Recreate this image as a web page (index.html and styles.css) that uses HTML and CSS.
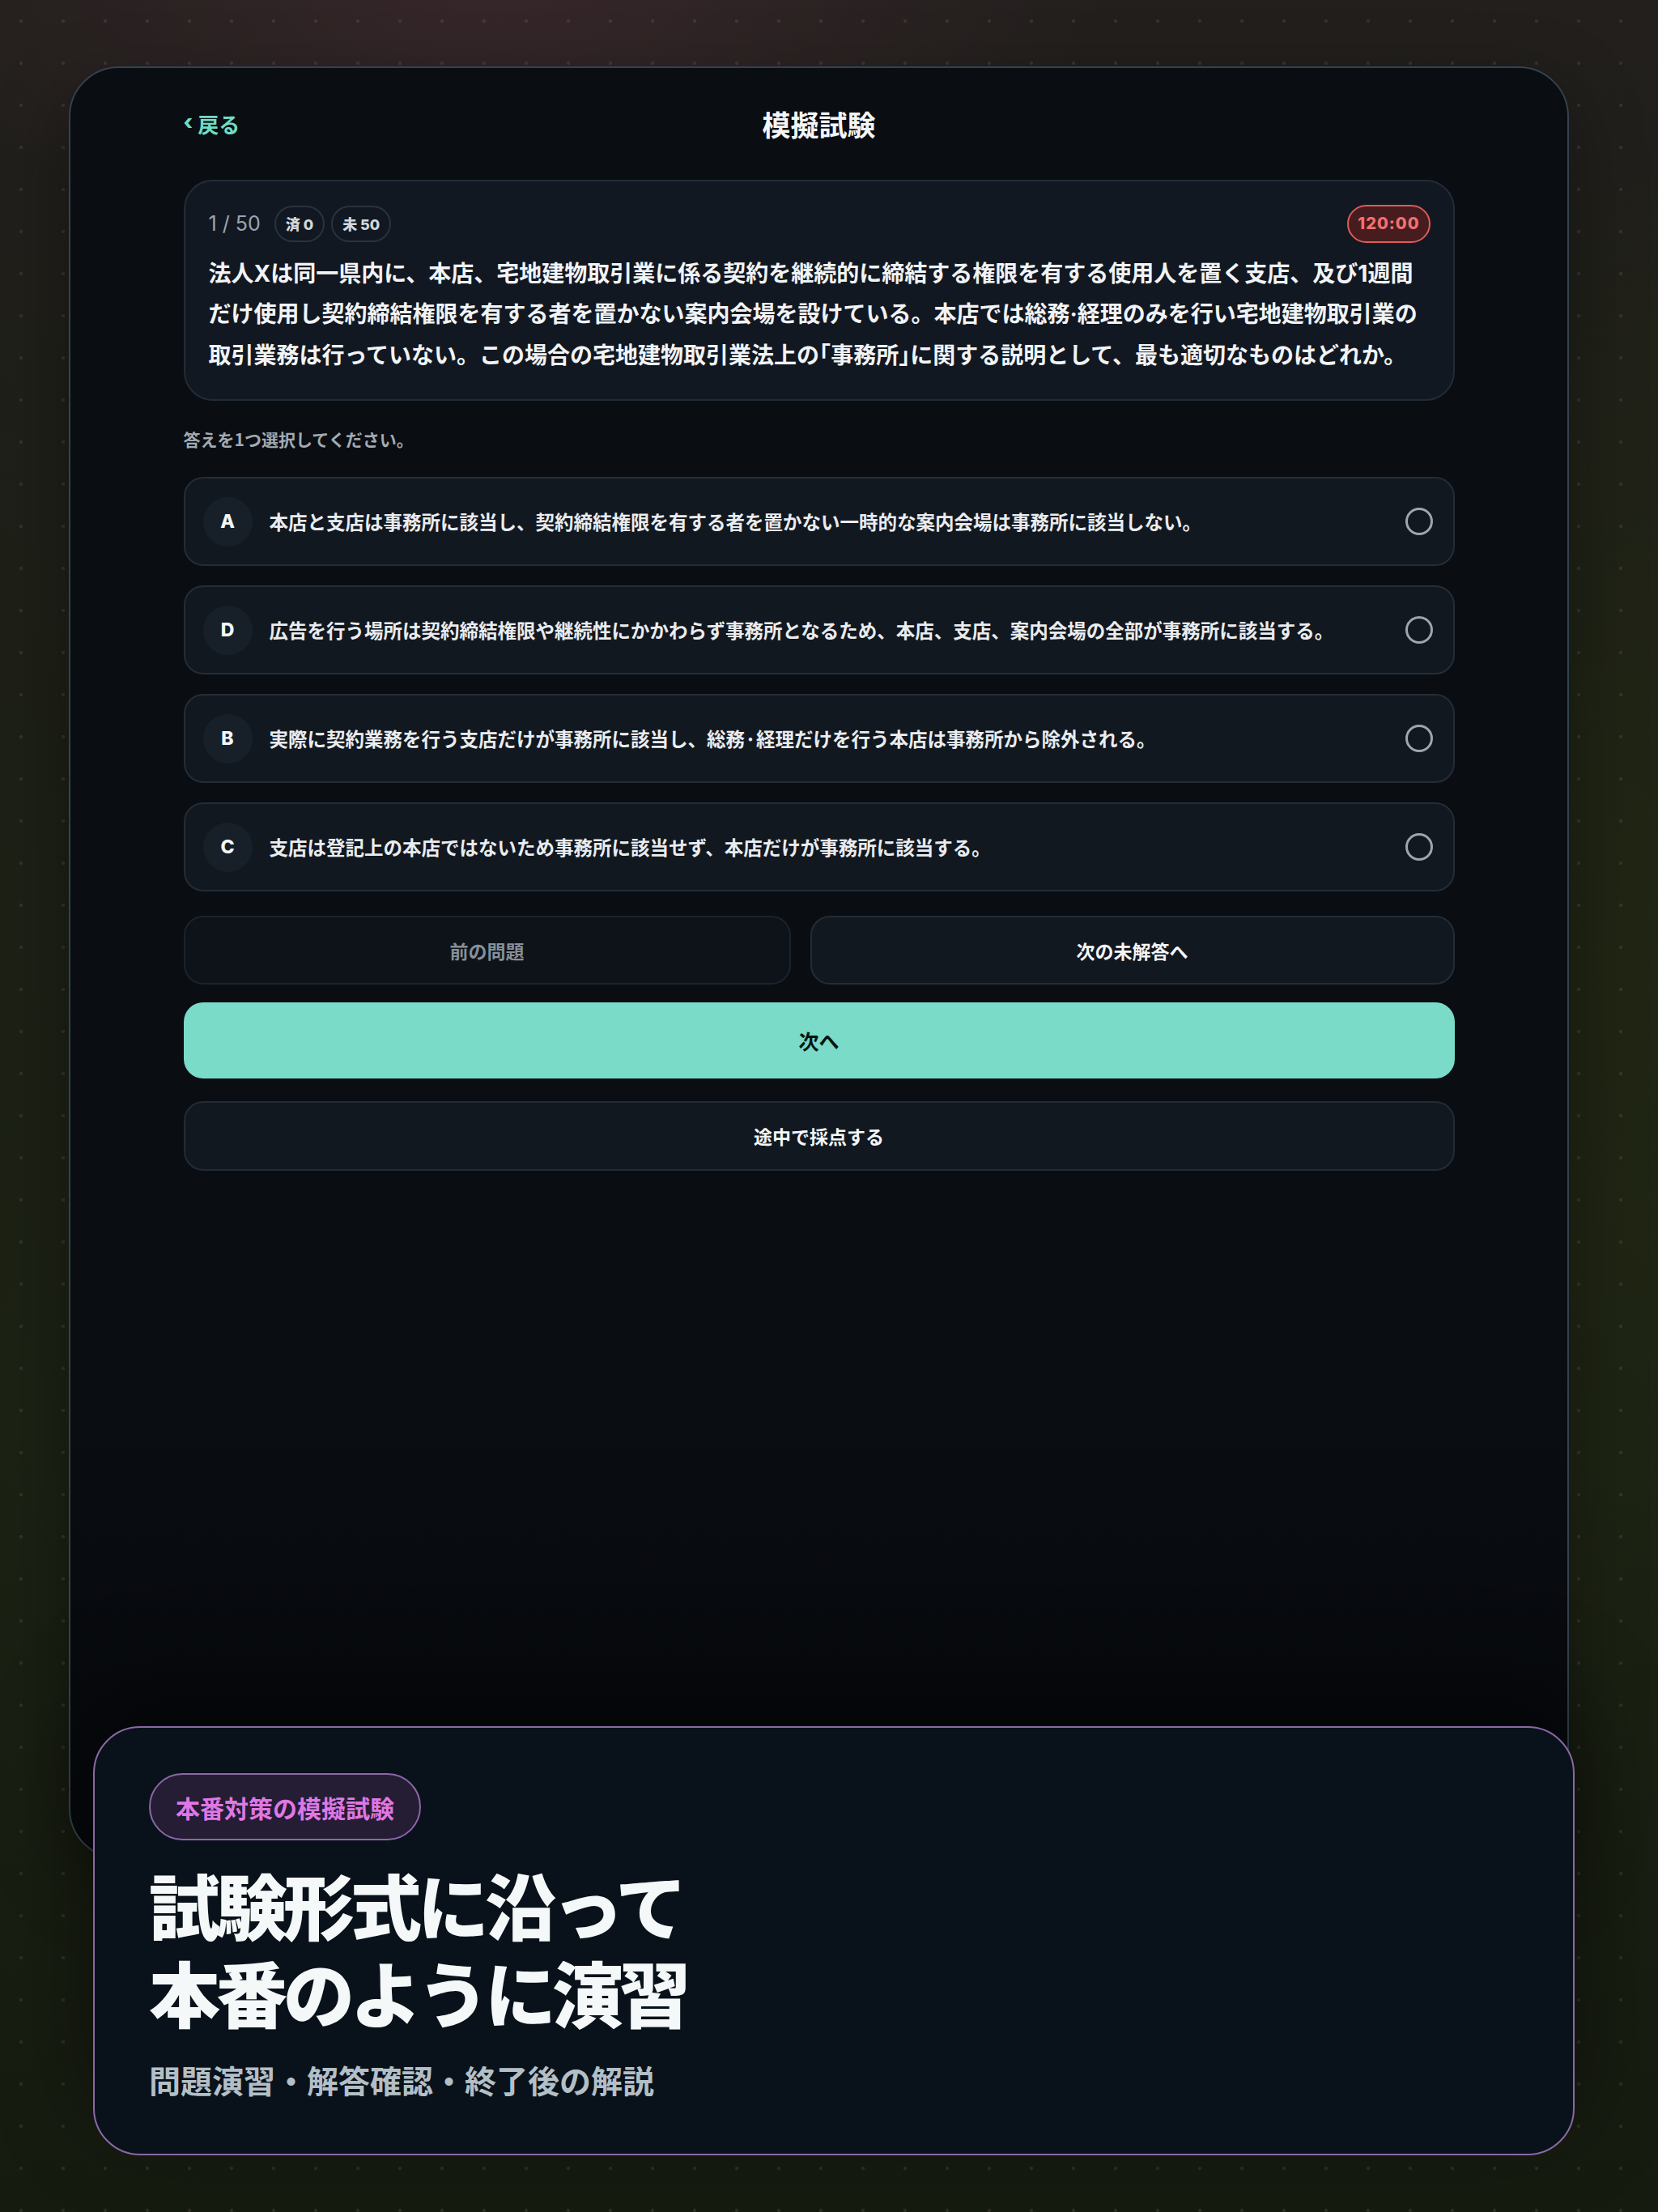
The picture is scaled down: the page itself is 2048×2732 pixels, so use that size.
FILE: index.html
```html
<!DOCTYPE html>
<html lang="ja">
<head>
<meta charset="utf-8">
<title>模擬試験</title>
<link rel="stylesheet" href="styles.css">
</head>
<body>
<div class="stage">
  <div class="frame">
    <div class="content">
      <header class="topbar">
        <a class="back"><span class="chev">‹</span> 戻る</a>
        <h1 class="title">模擬試験</h1>
        <span></span>
      </header>

      <section class="qcard">
        <div class="qtop">
          <span class="count">1 / 50</span>
          <span class="chip">済 0</span>
          <span class="chip">未 50</span>
          <span class="timer">120:00</span>
        </div>
        <p class="qtext">
          <span class="ln">法人Xは同一県内に、本店、宅地建物取引業に係る契約を継続的に締結する権限を有する使用人を置く支店、及び1週間</span>
          <span class="ln">だけ使用し契約締結権限を有する者を置かない案内会場を設けている。本店では総務·経理のみを行い宅地建物取引業の</span>
          <span class="ln">取引業務は行っていない。この場合の宅地建物取引業法上の<span class="half">「</span>事務所<span class="half">」</span>に関する説明として、最も適切なものはどれか。</span>
        </p>
      </section>

      <p class="hint">答えを1つ選択してください。</p>

      <ul class="options">
        <li class="opt"><span class="letter">A</span><span class="otext">本店と支店は事務所に該当し、契約締結権限を有する者を置かない一時的な案内会場は事務所に該当しない。</span><span class="radio"></span></li>
        <li class="opt"><span class="letter">D</span><span class="otext">広告を行う場所は契約締結権限や継続性にかかわらず事務所となるため、本店、支店、案内会場の全部が事務所に該当する。</span><span class="radio"></span></li>
        <li class="opt"><span class="letter">B</span><span class="otext">実際に契約業務を行う支店だけが事務所に該当し、総務·経理だけを行う本店は事務所から除外される。</span><span class="radio"></span></li>
        <li class="opt"><span class="letter">C</span><span class="otext">支店は登記上の本店ではないため事務所に該当せず、本店だけが事務所に該当する。</span><span class="radio"></span></li>
      </ul>

      <div class="navrow">
        <button class="btn btn-prev">前の問題</button>
        <button class="btn btn-skip">次の未解答へ</button>
      </div>
      <button class="btn btn-next">次へ</button>
      <button class="btn btn-grade">途中で採点する</button>
    </div>
  </div>

  <section class="promo">
    <span class="tag">本番対策の模擬試験</span>
    <h2 class="headline"><span class="hl">試験形式に沿って</span><span class="hl">本番のように演習</span></h2>
    <p class="sub">問題演習・解答確認・終了後の解説</p>
  </section>
</div>
</body>
</html>
```

FILE: styles.css
```css
* { box-sizing: border-box; }

html, body {
  margin: 0;
  padding: 0;
}

body {
  width: 2048px;
  height: 2732px;
  overflow: hidden;
  font-family: Inter, "Noto Sans CJK JP", sans-serif;
  color: #f1f3f5;
  background-color: #1b1f14;
  background-image:
    radial-gradient(circle, rgba(205, 180, 205, 0.12) 1.6px, transparent 2.6px),
    radial-gradient(ellipse 1000px 420px at 30% 0%, rgba(58, 40, 44, 0.85), rgba(58, 40, 44, 0) 75%),
    radial-gradient(ellipse 700px 1400px at 100% 45%, rgba(34, 40, 18, 0.7), rgba(34, 40, 18, 0) 75%),
    linear-gradient(180deg, #221f1d 0%, #1d2016 35%, #1c2214 65%, #161b10 100%);
  background-size: 52px 52px, auto, auto, auto;
}

.stage {
  position: relative;
  width: 2048px;
  height: 2732px;
  padding: 82px 0 0 85px;
}

/* ---------- device frame ---------- */
.frame {
  width: 1853px;
  height: 2214px;
  border: 2px solid #33424e;
  border-radius: 62px;
  background: linear-gradient(180deg, #0a0d12 0%, #0a0d12 72%, #06080b 100%);
  padding-top: 38px;
  box-shadow: 0 30px 90px rgba(0, 0, 0, 0.35);
}

.content {
  width: 1570px;
  margin: 0 auto;
}

.topbar {
  display: grid;
  grid-template-columns: 1fr auto 1fr;
  align-items: center;
  height: 60px;
}

.back {
  font-family: "Noto Sans CJK JP", sans-serif;
  font-size: 26px;
  font-weight: 700;
  color: #6fdcc4;
  display: flex;
  align-items: center;
  gap: 6px;
}

.chev {
  font-family: Inter, sans-serif;
  font-size: 26px;
  font-weight: 800;
  line-height: 1;
  margin-top: -3px;
}

.title {
  margin: 0;
  font-family: "Noto Sans CJK JP", sans-serif;
  font-size: 35px;
  font-weight: 700;
  color: #f4f5f7;
}

/* ---------- question card ---------- */
.qcard {
  margin-top: 40px;
  border: 2px solid #222c36;
  border-radius: 36px;
  background: #121821;
  padding: 29px 28px 29px 29px;
}

.qtop {
  display: flex;
  align-items: center;
  height: 46px;
}

.count {
  font-family: Inter, sans-serif;
  font-size: 25px;
  font-weight: 400;
  color: #9ba5af;
  margin-right: 17px;
}

.chip {
  display: inline-flex;
  align-items: center;
  height: 45px;
  padding: 0 12px;
  margin-right: 8px;
  border: 2px solid #28333e;
  border-radius: 23px;
  font-size: 18px;
  font-weight: 800;
  color: #d3d8dd;
}

.timer {
  margin-left: auto;
  display: inline-flex;
  align-items: center;
  height: 47px;
  padding: 0 11px;
  border: 2px solid #e05a5a;
  border-radius: 24px;
  background: #461c1f;
  color: #f37070;
  font-family: Inter, sans-serif;
  font-size: 20px;
  font-weight: 800;
  letter-spacing: 1px;
}

.qtext {
  margin: 14px 0 0;
  font-family: Inter, "Noto Sans CJK JP", sans-serif;
  font-size: 28px;
  line-height: 50.4px;
  font-weight: 700;
  color: #f1f3f5;
}

.ln {
  display: block;
  white-space: nowrap;
}

.half {
  font-feature-settings: "halt";
}

.hint {
  margin: 32px 0 0;
  height: 30px;
  line-height: 30px;
  font-family: "Noto Sans CJK JP", sans-serif;
  font-size: 21px;
  font-weight: 700;
  color: #a3aab2;
}

/* ---------- options ---------- */
.options {
  list-style: none;
  margin: 32px 0 0;
  padding: 0;
  display: flex;
  flex-direction: column;
  gap: 24px;
}

.opt {
  display: flex;
  align-items: center;
  height: 110px;
  padding: 0 25px 0 22px;
  border: 2px solid #232d37;
  border-radius: 24px;
  background: #121820;
}

.letter {
  flex: 0 0 61px;
  width: 61px;
  height: 61px;
  border-radius: 50%;
  background: #172028;
  display: flex;
  align-items: center;
  justify-content: center;
  font-family: Inter, sans-serif;
  font-size: 23px;
  font-weight: 800;
  color: #f4f6f8;
}

.otext {
  flex: 1 1 auto;
  margin-left: 21px;
  font-family: "Noto Sans CJK JP", sans-serif;
  font-size: 23.5px;
  font-weight: 700;
  color: #e9ecef;
  white-space: nowrap;
}

.radio {
  flex: 0 0 34px;
  width: 34px;
  height: 34px;
  border: 3px solid #9ea5af;
  border-radius: 50%;
  margin-left: 16px;
}

/* ---------- buttons ---------- */
.btn {
  display: flex;
  align-items: center;
  justify-content: center;
  width: 100%;
  margin: 0;
  font-family: "Noto Sans CJK JP", sans-serif;
  font-weight: 700;
  cursor: pointer;
}

.navrow {
  display: flex;
  gap: 24px;
  margin-top: 30px;
}

.navrow .btn {
  flex: 1 1 auto;
  width: auto;
  height: 85px;
  padding: 0;
  border-radius: 24px;
  font-size: 23px;
}

.btn-prev {
  background: #0e131a;
  border: 2px solid #1b232c;
  color: #878f98;
}

.btn-skip {
  background: #121820;
  border: 2px solid #232d37;
  color: #f4f6f8;
}

.btn-next {
  margin-top: 22px;
  height: 94px;
  border: 0;
  border-radius: 24px;
  background: #79dbc8;
  color: #09140f;
  font-size: 25px;
}

.btn-grade {
  margin-top: 28px;
  height: 86px;
  border: 2px solid #222c36;
  border-radius: 24px;
  background: #121820;
  color: #f4f6f8;
  font-size: 23px;
}

/* ---------- promo overlay card ---------- */
.promo {
  position: absolute;
  left: 115px;
  top: 2132px;
  width: 1830px;
  height: 530px;
  border: 2px solid #8a68a6;
  border-radius: 58px;
  background: #09121a;
  padding: 56px 60px 0 67px;
  box-shadow: 0 -40px 120px rgba(0, 0, 0, 0.45);
}

.tag {
  display: inline-flex;
  align-items: center;
  height: 83px;
  padding: 0 31px;
  border: 2px solid #8d66aa;
  border-radius: 42px;
  background: #241d33;
  color: #df77e5;
  font-family: "Noto Sans CJK JP", sans-serif;
  font-size: 30px;
  font-weight: 700;
}

.headline {
  margin: 24px 0 0;
  font-family: "Noto Sans CJK JP", sans-serif;
  font-size: 88px;
  font-weight: 900;
  letter-spacing: -5px;
  color: #f4f8f9;
}

.hl {
  display: block;
  height: 108px;
  line-height: 108px;
  white-space: nowrap;
}

.sub {
  margin: 30px 0 0;
  font-family: "Noto Sans CJK JP", sans-serif;
  font-size: 39px;
  line-height: 50px;
  font-weight: 700;
  letter-spacing: 0;
  color: #b3bfc7;
}
```
